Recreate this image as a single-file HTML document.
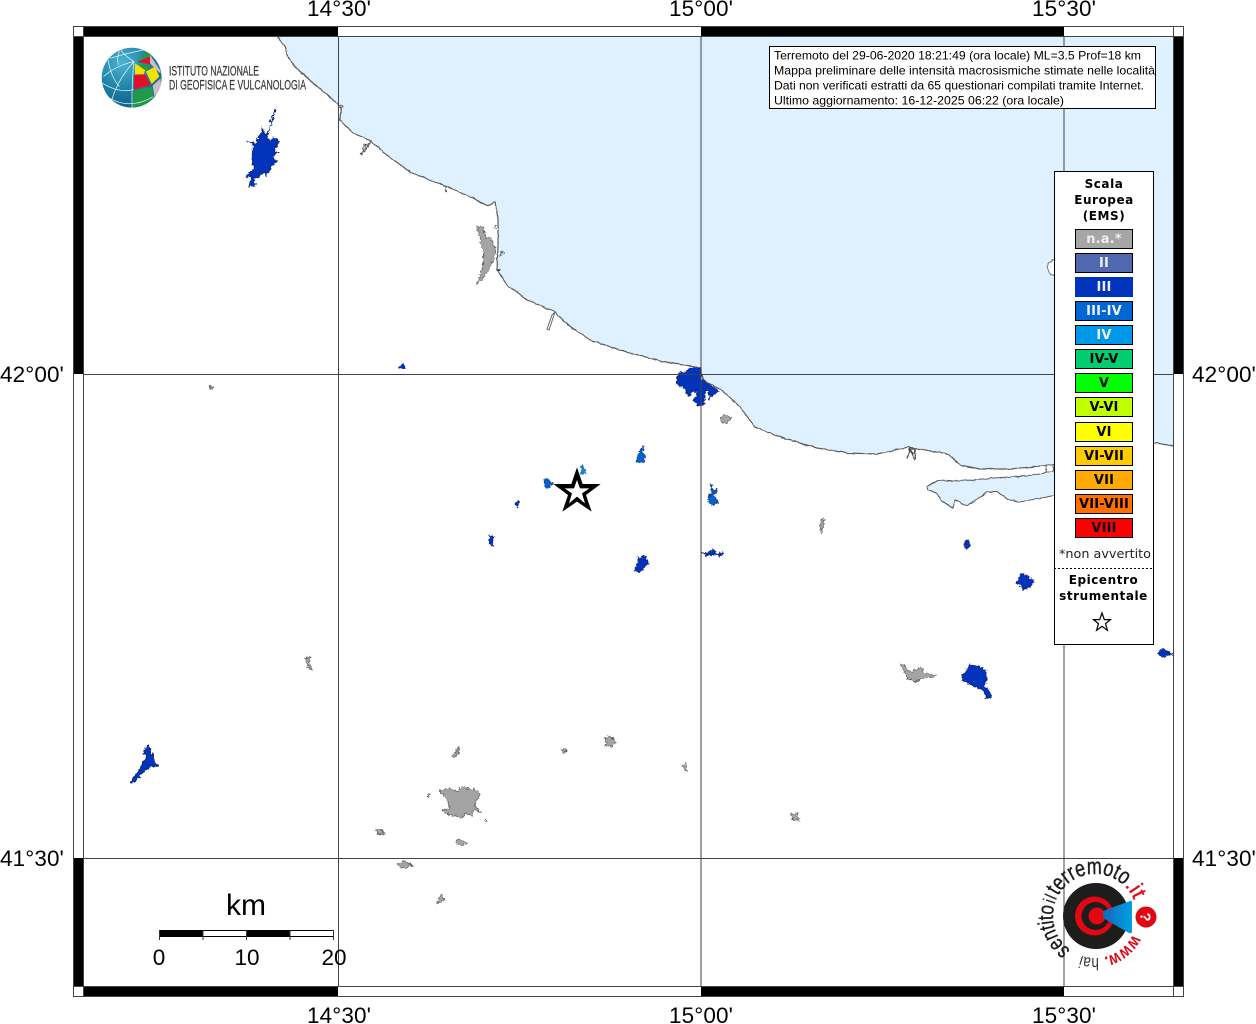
<!DOCTYPE html>
<html><head><meta charset="utf-8"><style>
html,body{margin:0;padding:0;background:#fff;width:1256px;height:1024px;overflow:hidden}
svg{display:block}
.ax{font:22.5px "Liberation Sans",sans-serif;fill:#000;letter-spacing:.1px}
.t{font:12px "Liberation Sans",sans-serif;fill:#000}
.lg{font:bold 12px "DejaVu Sans",sans-serif;text-anchor:middle;letter-spacing:.55px}
.sw{font:bold 13px "DejaVu Sans",sans-serif;text-anchor:middle;letter-spacing:.15px}
.b3{fill:#0333bb;stroke:#12246e;stroke-width:2;stroke-linejoin:round}
.b2{fill:#0a60d0;stroke:#123c80;stroke-width:2;stroke-linejoin:round}
.g{fill:#a4a4a4;stroke:#555;stroke-width:2;stroke-linejoin:round}
</style></head><body>
<svg width="1256" height="1024" viewBox="0 0 1256 1024" xmlns="http://www.w3.org/2000/svg">
<defs>
<filter id="jag" filterUnits="userSpaceOnUse" x="0" y="0" width="1256" height="1024" color-interpolation-filters="sRGB">
<feTurbulence type="fractalNoise" baseFrequency=".38" numOctaves="2" seed="4" result="n"/>
<feDisplacementMap in="SourceGraphic" in2="n" scale="5" xChannelSelector="R" yChannelSelector="G" result="d"/>
<feGaussianBlur in="d" stdDeviation=".3"/>
</filter>
<filter id="cst" filterUnits="userSpaceOnUse" x="0" y="0" width="1256" height="1024" color-interpolation-filters="sRGB">
<feTurbulence type="fractalNoise" baseFrequency=".18" numOctaves="2" seed="9" result="n"/>
<feDisplacementMap in="SourceGraphic" in2="n" scale="2.2" xChannelSelector="R" yChannelSelector="G"/>
</filter>
<clipPath id="inner"><rect x="83" y="36" width="1091" height="951"/></clipPath>
<radialGradient id="gl" cx=".35" cy=".25" r=".85">
<stop offset="0" stop-color="#4cb5d0"/><stop offset=".55" stop-color="#1b7fa5"/><stop offset="1" stop-color="#0c5680"/>
</radialGradient>
<linearGradient id="cone" x1="0" y1="0" x2="1" y2="0"><stop offset="0" stop-color="#1268b8"/><stop offset="1" stop-color="#00a0e4"/></linearGradient>
<clipPath id="gc"><circle cx="215" cy="188" r="90"/></clipPath>
<path id="ring" d="M1137,916 A42,42 0 0 1 1053,916 A42,42 0 0 1 1137,916"/>
</defs>
<rect width="1256" height="1024" fill="#fff"/>
<g clip-path="url(#inner)">
<g filter="url(#cst)">
<!-- sea -->
<path d="M272,28 L277,36 285,47 287,55 295,67 313,83 328,95 338,105 341,107 340,120 353,133 369,140 387,155 410,172 443,185 473,198 487,206 495,202 498,218 498,245 497,270 507,285 527,300 554,311 568,325 590,340 620,350 660,361 680,364 700,368 703,380 723,391 740,407 755,427 783,438 817,448 847,453 877,454 908,447 948,454 960,465 980,469 1010,469 1052,465 1100,455 1156,443 1180,447 L1180,28 Z" fill="#dff1fe" stroke="#5c5c5c" stroke-width="1.2"/>
<!-- lagoon -->
<path d="M928,490 L927,487 937,480 960,481 993,478 1027,476 1040,474 1047,472 1060,472 1060,494 1052,496 1020,502 1010,500 997,492 987,492 967,506 955,500 953,508 943,502 937,494 Z" fill="#dff1fe" stroke="#5c5c5c" stroke-width="1.1"/>
<rect x="1046" y="465" width="7" height="7" fill="#fff" stroke="#666" stroke-width="1"/>
<!-- Tremiti -->
<path d="M1047,266 L1052,260 1060,258 1060,275 1050,275 Z" fill="#fff" stroke="#777" stroke-width="1"/>
<!-- Termoli marks -->
<path d="M907,459 L910,449 914,449 916,459 M909,449 L913,454" fill="none" stroke="#444" stroke-width="1.3"/>
<path d="M909,447 L915,460 M917,448 L912,455" fill="none" stroke="#444" stroke-width=".9"/>
</g>
<g filter="url(#jag)">
<g transform="translate(60,15) scale(.3333)">
<polygon class="b3" points="650,278 630,320 640,318 618,360 603,335 607,350 597,362 590,385 560,380 580,388 575,430 580,465 555,487 575,485 565,515 590,512 580,492 598,485 612,470 618,485 635,455 650,440 638,425 655,412 640,408 660,378 640,365 635,380 620,368 635,320"/>
</g>
<g transform="translate(270,25) scale(.3333)">
<polygon class="g" points="622,605 640,605 642,625 650,640 660,635 668,650 678,680 668,710 650,745 635,765 620,778 630,755 640,720 640,680 630,640"/>
<polygon points="272,392 285,358 300,350 295,365" fill="#bbb" stroke="#444" stroke-width="3"/>
<path d="M525,482 L530,505 M610,515 L614,522" stroke="#555" stroke-width="4" fill="none"/>
<circle cx="680" cy="607" r="5" fill="#fff" stroke="#666" stroke-width="3"/>
<circle cx="695" cy="686" r="5" fill="#fff" stroke="#666" stroke-width="3"/>
<circle cx="688" cy="735" r="3" fill="#222"/>
<circle cx="212" cy="245" r="4" fill="#fff" stroke="#555" stroke-width="3"/>
</g>
<g transform="translate(660,350) scale(.3333)">
<polygon class="b3" points="122,52 125,88 150,105 178,125 160,135 148,148 145,118 135,125 136,140 130,165 112,168 100,150 110,140 108,120 95,130 85,140 75,115 48,100 55,70 75,65 90,55"/>
<polygon class="g" points="180,205 195,192 215,205 200,220 185,218"/>
<polygon class="b2" points="152,400 158,420 172,425 160,435 175,458 160,465 142,450 155,425"/>
</g>
<g transform="translate(500,430) scale(.3333)">
<polygon points="248,105 255,120 260,130 240,130" fill="#0a90e0" stroke="#155a90" stroke-width="2"/>
<polygon class="b2" points="130,150 145,145 150,155 160,163 150,165 148,175 138,172"/>
<polygon class="b3" points="48,215 55,213 60,222 52,232 46,225"/>
<polygon class="b2" points="430,48 432,60 425,65 435,75 435,95 410,97 412,75"/>
<polygon class="b2" points="630,158 636,180 652,180 640,190 652,215 640,225 622,215 634,190"/>
<polygon class="b3" points="410,380 420,385 435,375 445,400 430,415 420,428 404,425 405,410 415,400"/>
<polygon class="b3" points="604,368 625,370 640,356 650,370 670,368 660,382 645,372 625,378"/>
</g>
<polygon class="b3" style="stroke-width:.7" points="490,534 494,537 492,541 494,546 489,544"/>
<polygon class="b3" style="stroke-width:.7" points="965,541 969,540 970,545 967,549 965,546"/>
<polygon class="b3" style="stroke-width:.7" points="1021,573 1028,576 1034,582 1030,587 1023,590 1022,586 1016,584 1019,578"/>
<polygon class="b3" style="stroke-width:.7" points="1158,651 1163,649 1173,654 1165,657 1159,656"/>
<polygon class="b3" style="stroke-width:.7" points="398,367 403,364 406,369 399,369"/>
<g transform="translate(890,640) scale(.3333)">
<polygon class="g" points="32,72 45,75 50,90 70,95 75,88 92,82 105,100 140,104 125,112 105,112 75,125 50,115 45,100"/>
<polygon class="b3" points="240,75 270,78 290,95 288,130 280,140 298,150 305,170 290,175 280,150 262,145 235,130 220,125 215,105 228,95"/>
</g>
<g transform="translate(120,730) scale(.3333)">
<polygon class="b3" points="85,45 95,70 105,95 118,110 100,108 75,120 45,155 32,158 60,115 70,95 80,85 70,65"/>
</g>
<g transform="translate(370,730) scale(.3333)">
<polygon class="g" points="207,182 240,175 262,185 275,170 298,178 320,180 332,195 320,210 315,228 335,248 310,240 305,258 285,250 275,265 255,258 235,255 218,240 240,235 230,205"/>
<polygon class="g" points="265,52 270,62 255,82 248,78"/>
<polygon class="g" points="175,188 182,190 175,203 171,197"/>
<polygon class="g" points="345,267 352,273 345,272"/>
<polygon class="g" points="17,300 32,297 46,312 25,312"/>
<polygon class="g" points="258,328 275,330 290,340 270,347 258,338"/>
<polygon class="g" points="85,402 100,393 125,403 128,408 105,415 90,412"/>
<polygon class="g" points="215,490 225,510 198,522 210,500"/>
</g>
<g fill="#a4a4a4" stroke="#555" stroke-width=".7">
<polygon points="305,658 310,657 309,663 312,670 307,667"/>
<polygon points="605,739 610,736 616,742 612,747 606,745"/>
<polygon points="562,750 566,748 567,751 563,753"/>
<polygon points="683,765 686,763 687,772 684,769"/>
<polygon points="791,814 797,813 799,820 793,821"/>
<polygon points="821,519 824,518 823,527 821,533 820,526"/>
<polygon points="209,386 212,386 212,389 210,389"/>
</g>
</g>
<polygon points="552,315 555,312 549,330 547,329" fill="#fff" stroke="#666" stroke-width="1"/>
</g>
<!-- star -->
<g transform="translate(500,430) scale(.3333)">
<polygon points="231,112 248,162 302,162 258,195 275,245 231,215 187,245 204,195 160,162 214,162" fill="#000"/>
<polygon points="231,150 240,175 268,175 246,190 255,220 231,200 207,220 216,190 194,175 222,175" fill="#fff"/>
</g>
<!-- grid -->
<path d="M338.5,36V987M701,36V987M1064,36V987M83,374.5H1173M83,858.5H1173" stroke="#444" stroke-width="1" fill="none"/>
<!-- frame -->
<g fill="#000">
<rect x="83" y="26" width="255" height="10"/>
<rect x="701" y="26" width="363" height="10"/>
<rect x="83" y="987" width="255" height="10"/>
<rect x="701" y="987" width="363" height="10"/>
<rect x="73" y="36" width="10" height="338"/>
<rect x="73" y="858" width="10" height="129"/>
<rect x="1173" y="36" width="10" height="338"/>
<rect x="1173" y="858" width="10" height="129"/>
</g>
<g fill="none" stroke="#444" stroke-width="1">
<rect x="73.5" y="26.5" width="1110" height="970"/>
<rect x="83.5" y="36.5" width="1090" height="950"/>
<path d="M83.5,26.5V36.5M1173.5,26.5V36.5M83.5,986.5V996.5M1173.5,986.5V996.5M73.5,36.5H83.5M73.5,986.5H83.5M1173.5,36.5H1183.5M1173.5,986.5H1183.5"/>
</g>
<!-- axis labels -->
<text class="ax" x="339" y="16" text-anchor="middle">14°30'</text>
<text class="ax" x="701" y="16" text-anchor="middle">15°00'</text>
<text class="ax" x="1064" y="16" text-anchor="middle">15°30'</text>
<text class="ax" x="339" y="1023" text-anchor="middle">14°30'</text>
<text class="ax" x="701" y="1023" text-anchor="middle">15°00'</text>
<text class="ax" x="1064" y="1023" text-anchor="middle">15°30'</text>
<text class="ax" x="0" y="382">42°00'</text>
<text class="ax" x="0" y="866">41°30'</text>
<text class="ax" x="1192" y="382">42°00'</text>
<text class="ax" x="1192" y="866">41°30'</text>
<!-- INGV logo -->
<g transform="translate(60,15) scale(.3333)">
<g clip-path="url(#gc)">
<circle cx="215" cy="188" r="90" fill="url(#gl)"/>
<polygon points="228,135 265,108 275,125 245,130" fill="#2a9a3a"/>
<polygon points="232,140 270,125 275,150" fill="#e0102a"/>
<polygon points="270,120 300,165 305,180 270,145" fill="#c9bccb"/>
<polygon points="232,143 272,152 258,170" fill="#2a9a3a"/>
<polygon points="225,145 255,165 252,178 225,178" fill="#f5e000"/>
<polygon points="258,170 285,155 298,185 275,207" fill="#f5e000"/>
<polygon points="298,170 305,175 305,187" fill="#2a9a3a"/>
<polygon points="222,180 255,178 272,210 222,224" fill="#e0102a"/>
<polygon points="278,212 302,190 303,225 283,245" fill="#c9bccb"/>
<polygon points="220,228 275,215 282,245 260,268 218,278" fill="#1f9a48"/>
<polygon points="282,247 295,232 285,250" fill="#e0102a"/>
<g fill="none" stroke="#e6f2f5" stroke-width="2.2">
<path d="M222,140 Q215,200 216,280"/>
<path d="M222,140 Q175,190 155,255"/>
<path d="M222,140 Q170,150 130,185"/>
<path d="M222,140 Q190,120 180,100"/>
<path d="M145,135 Q150,180 178,215"/>
<path d="M178,108 Q170,130 175,150"/>
<path d="M128,205 Q175,235 222,224"/>
<path d="M150,250 Q210,285 280,245"/>
<path d="M150,130 Q200,115 250,105"/>
</g>
</g>
</g>
<g fill="#3a3a3a" stroke="#3a3a3a" stroke-width=".25" font-family="'Liberation Sans Narrow','Liberation Sans',sans-serif" font-size="13.5">
<text x="169" y="75.5" textLength="90" lengthAdjust="spacingAndGlyphs">ISTITUTO NAZIONALE</text>
<text x="169" y="89.5" textLength="137" lengthAdjust="spacingAndGlyphs">DI GEOFISICA E VULCANOLOGIA</text>
</g>
<!-- title box -->
<rect x="769.5" y="46.5" width="386" height="62" fill="#fff" stroke="#000" stroke-width="1"/>
<text class="t" x="774" y="59.5" textLength="367" lengthAdjust="spacingAndGlyphs">Terremoto del 29-06-2020 18:21:49 (ora locale) ML=3.5 Prof=18 km</text>
<text class="t" x="774" y="74.5" textLength="381" lengthAdjust="spacingAndGlyphs">Mappa preliminare delle intensità macrosismiche stimate nelle località</text>
<text class="t" x="774" y="89.5" textLength="370" lengthAdjust="spacingAndGlyphs">Dati non verificati estratti da 65 questionari compilati tramite Internet.</text>
<text class="t" x="774" y="104.5" textLength="290" lengthAdjust="spacingAndGlyphs">Ultimo aggiornamento: 16-12-2025 06:22 (ora locale)</text>
<!-- legend -->
<rect x="1054.5" y="171.5" width="99" height="473" fill="#fff" stroke="#000" stroke-width="1"/>
<text class="lg" x="1104" y="188">Scala</text>
<text class="lg" x="1104" y="204">Europea</text>
<text class="lg" x="1104" y="220">(EMS)</text>
<g stroke="#000" stroke-width="1">
<rect x="1075.5" y="229.5" width="57" height="19" fill="#a6a6a6"/>
<rect x="1075.5" y="253.5" width="57" height="19" fill="#5068b0"/>
<rect x="1075.5" y="277.5" width="57" height="19" fill="#0033bb" stroke="#0033bb"/>
<rect x="1075.5" y="301.5" width="57" height="19" fill="#0066d4"/>
<rect x="1075.5" y="325.5" width="57" height="19" fill="#0099ea"/>
<rect x="1075.5" y="349.5" width="57" height="19" fill="#00cc70"/>
<rect x="1075.5" y="373.5" width="57" height="19" fill="#00ff00"/>
<rect x="1075.5" y="397.5" width="57" height="19" fill="#c0ff00"/>
<rect x="1075.5" y="422.5" width="57" height="19" fill="#ffff00"/>
<rect x="1075.5" y="446.5" width="57" height="19" fill="#ffcc00"/>
<rect x="1075.5" y="470.5" width="57" height="19" fill="#ffaa00"/>
<rect x="1075.5" y="494.5" width="57" height="19" fill="#ff7000"/>
<rect x="1075.5" y="518.5" width="57" height="19" fill="#ff0000"/>
</g>
<text class="sw" x="1104" y="243" fill="#eee">n.a.*</text>
<text class="sw" x="1104" y="267" fill="#eee">II</text>
<text class="sw" x="1104" y="291" fill="#eee">III</text>
<text class="sw" x="1104" y="315" fill="#eee">III-IV</text>
<text class="sw" x="1104" y="339" fill="#eee">IV</text>
<text class="sw" x="1104" y="363" fill="#000">IV-V</text>
<text class="sw" x="1104" y="387" fill="#000">V</text>
<text class="sw" x="1104" y="411" fill="#000">V-VI</text>
<text class="sw" x="1104" y="436" fill="#000">VI</text>
<text class="sw" x="1104" y="460" fill="#000">VI-VII</text>
<text class="sw" x="1104" y="484" fill="#000">VII</text>
<text class="sw" x="1104" y="508" fill="#000">VII-VIII</text>
<text class="sw" x="1104" y="532" fill="#000">VIII</text>
<text x="1105" y="558" text-anchor="middle" font-family="'DejaVu Sans',sans-serif" font-size="12" fill="#222" textLength="92" lengthAdjust="spacingAndGlyphs">*non avvertito</text>
<path d="M1054,568.5H1153" stroke="#000" stroke-dasharray="2,2" stroke-width="1"/>
<text class="lg" x="1103.5" y="584">Epicentro</text>
<text class="lg" x="1103.5" y="600">strumentale</text>
<polygon points="1102,613 1104.3,619.6 1110.5,619.6 1105.5,623.6 1107.4,630.3 1102,626.4 1096.6,630.3 1098.5,623.6 1093.5,619.6 1099.7,619.6" fill="#fff" stroke="#000" stroke-width="1.2"/>
<!-- scale bar -->
<rect x="159.5" y="930.5" width="174" height="6" fill="#fff" stroke="#000" stroke-width="1"/>
<rect x="159" y="930" width="44" height="7" fill="#000"/>
<rect x="246" y="930" width="44" height="7" fill="#000"/>
<path d="M159.5,930V940M203,930V940M246.5,930V940M290,930V940M333.5,930V940" stroke="#333" stroke-width="1"/>
<text x="246" y="915" text-anchor="middle" font-family="'Liberation Sans',sans-serif" font-size="30">km</text>
<g font-family="'Liberation Sans',sans-serif" font-size="22.5" text-anchor="middle">
<text x="159" y="965">0</text><text x="247" y="965">10</text><text x="334" y="965">20</text>
</g>
<!-- terremoto logo -->
<circle cx="1096" cy="916" r="33" fill="#1d1d1b"/>
<circle cx="1094.5" cy="916" r="19.5" fill="#e30613"/>
<circle cx="1095.5" cy="916" r="14" fill="#1d1d1b"/>
<circle cx="1097" cy="916" r="8.5" fill="#e30613"/>
<path d="M1103,911 L1130,901 Q1132,900 1132,903 L1132,931 Q1132,934 1129,933 L1103,918 Z" fill="url(#cone)"/>
<circle cx="1146" cy="917" r="10.5" fill="#e30613"/>
<text x="1146" y="922.5" text-anchor="middle" transform="rotate(90 1146 917)" font-family="'Liberation Sans',sans-serif" font-weight="bold" font-size="15" fill="#fff">?</text>
<g font-family="'Liberation Sans Narrow','Liberation Sans',sans-serif">
<text font-size="18" font-weight="bold" fill="#e30613"><textPath href="#ring" startOffset="19" textLength="38" lengthAdjust="spacingAndGlyphs">www.</textPath></text>
<text font-size="17" fill="#333"><textPath href="#ring" startOffset="62" textLength="18" lengthAdjust="spacingAndGlyphs">hai</textPath></text>
<text font-size="22" fill="#1d1d1b" stroke="#1d1d1b" stroke-width=".4"><textPath href="#ring" startOffset="92" textLength="50" lengthAdjust="spacingAndGlyphs">sentito</textPath></text>
<text font-size="18" fill="#333"><textPath href="#ring" startOffset="143" textLength="8" lengthAdjust="spacingAndGlyphs">il</textPath></text>
<text font-size="23" fill="#1d1d1b" stroke="#1d1d1b" stroke-width=".4"><textPath href="#ring" startOffset="152.5" textLength="77" lengthAdjust="spacingAndGlyphs">terremoto</textPath></text>
<text font-size="22" fill="#e30613" stroke="#e30613" stroke-width=".3"><textPath href="#ring" startOffset="230" textLength="17" lengthAdjust="spacingAndGlyphs">.it</textPath></text>
</g>
</svg>
</body></html>
